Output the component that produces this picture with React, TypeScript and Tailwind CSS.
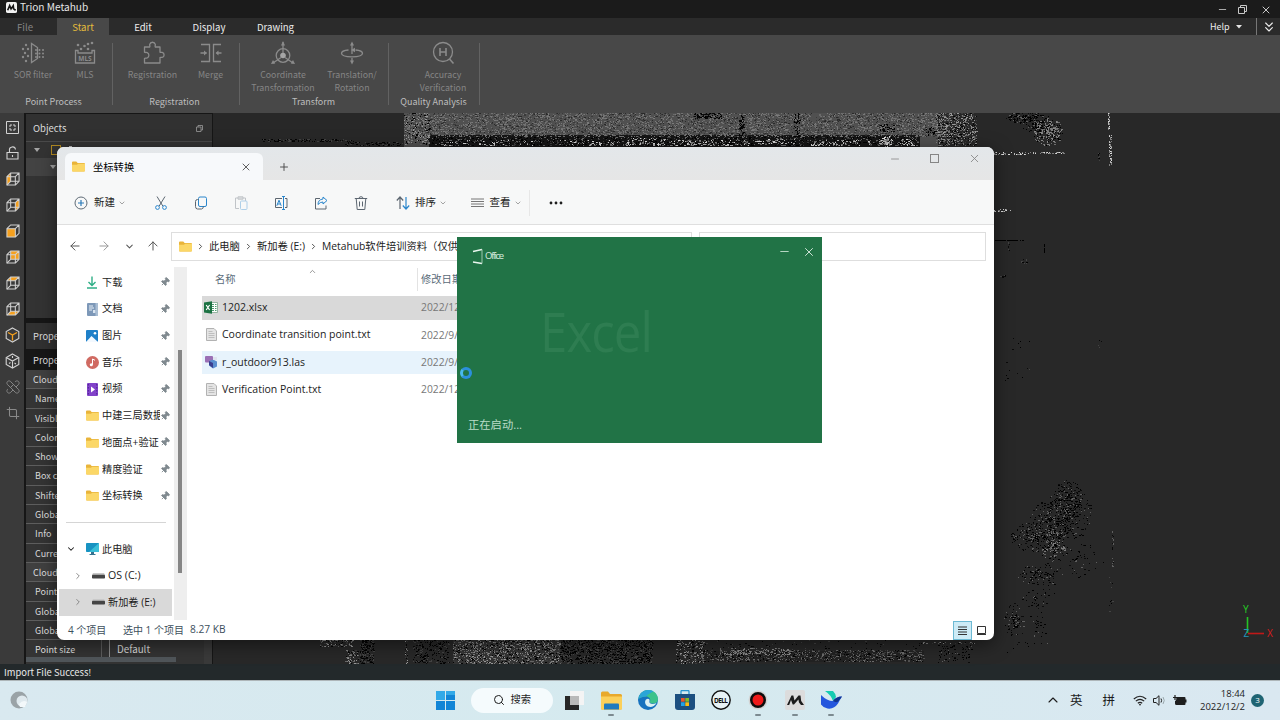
import { useMemo, type ReactNode } from "react";
import clsx from "clsx";
import { ArrowLeft, ArrowRight, ArrowUp, ChevronDown, ChevronRight, ChevronUp, ChevronsDown, Crop, Minus, Pin, Plus, Search, X } from "lucide-react";

/* ---------- point cloud viewport ---------- */

const makeRandom = (seed: number) => {
  let s = seed;
  return () => {
    s = (s * 1664525 + 1013904223) % 4294967296;
    return s / 4294967296;
  };
};

type Patch = { x: number; y: number; w: number; h: number; n: number; tones: string[]; round?: boolean };

const GREY = ["#808080", "#666666", "#989898", "#050505", "#3c3c3c"];
const DARK = ["#000000", "#0a0a0a", "#050505", "#444444"];
const LIGHT = ["#b8b8b8", "#dcdcdc", "#7f7f7f"];
const TREE = ["#000000", "#050505", "#000000", "#0c0c0c", "#5f5f5f"];

const patches: Patch[] = [
  // building roof along the top edge
  { x: 404, y: 113, w: 546, h: 24, n: 4600, tones: ["#7a7a7a", "#6b6b6b", "#3a3a3a", "#727272", "#2a2a2a"] },
  { x: 404, y: 113, w: 26, h: 32, n: 260, tones: GREY },
  { x: 936, y: 113, w: 41, h: 33, n: 640, tones: GREY },
  { x: 432, y: 137, w: 486, h: 9, n: 1200, tones: ["#000000", "#050505", "#6a6a6a", "#3d3d3d"] },
  { x: 440, y: 140, w: 96, h: 6, n: 50, tones: LIGHT },
  { x: 560, y: 140, w: 60, h: 6, n: 36, tones: LIGHT },
  { x: 625, y: 138, w: 40, h: 8, n: 60, tones: LIGHT },
  { x: 668, y: 140, w: 82, h: 6, n: 90, tones: LIGHT },
  { x: 755, y: 139, w: 40, h: 5, n: 45, tones: LIGHT },
  { x: 810, y: 140, w: 60, h: 6, n: 70, tones: LIGHT },
  { x: 879, y: 136, w: 14, h: 11, n: 80, tones: LIGHT, round: true },
  { x: 900, y: 139, w: 14, h: 7, n: 30, tones: LIGHT },
  { x: 694, y: 112, w: 28, h: 7, n: 150, tones: DARK },
  { x: 739, y: 114, w: 5, h: 22, n: 80, tones: DARK },
  { x: 794, y: 113, w: 6, h: 24, n: 90, tones: DARK },
  { x: 880, y: 124, w: 15, h: 8, n: 70, tones: DARK },
  { x: 926, y: 127, w: 9, h: 9, n: 60, tones: DARK, round: true },
  { x: 262, y: 139, w: 92, h: 3, n: 130, tones: DARK },
  { x: 345, y: 142, w: 58, h: 4, n: 70, tones: DARK },
  // tree and walls, upper right
  { x: 1006, y: 112, w: 34, h: 12, n: 110, tones: TREE, round: true },
  { x: 1020, y: 113, w: 34, h: 20, n: 130, tones: TREE, round: true },
  { x: 1033, y: 118, w: 30, h: 28, n: 250, tones: ["#000000", "#7d7d7d", "#6c6c6c", "#888888"], round: true },
  { x: 994, y: 152, w: 33, h: 3, n: 36, tones: LIGHT },
  { x: 1028, y: 152, w: 36, h: 2, n: 32, tones: LIGHT },
  { x: 994, y: 209, w: 17, h: 3, n: 18, tones: LIGHT },
  { x: 1108, y: 113, w: 2, h: 17, n: 40, tones: LIGHT },
  { x: 1109, y: 134, w: 3, h: 32, n: 70, tones: LIGHT },
  { x: 1098, y: 153, w: 2, h: 9, n: 14, tones: DARK },
  { x: 995, y: 240, w: 29, h: 1, n: 60, tones: ["#000000"] },
  { x: 1008, y: 242, w: 2, h: 10, n: 10, tones: DARK },
  { x: 1044, y: 244, w: 1, h: 9, n: 14, tones: ["#000000"] },
  { x: 1021, y: 259, w: 7, h: 5, n: 9, tones: DARK },
  { x: 1000, y: 275, w: 6, h: 3, n: 10, tones: DARK },
  { x: 1003, y: 335, w: 28, h: 56, n: 16, tones: DARK },
  { x: 1098, y: 340, w: 4, h: 8, n: 4, tones: DARK },
  // big tree, lower right
  { x: 1054, y: 480, w: 28, h: 32, n: 130, tones: TREE, round: true },
  { x: 1046, y: 486, w: 46, h: 54, n: 250, tones: TREE, round: true },
  { x: 1030, y: 500, w: 44, h: 40, n: 190, tones: TREE, round: true },
  { x: 1010, y: 522, w: 52, h: 30, n: 230, tones: TREE, round: true },
  { x: 1040, y: 528, w: 26, h: 34, n: 130, tones: ["#7a7a7a", "#000000", "#606060"], round: true },
  { x: 1048, y: 542, w: 56, h: 36, n: 60, tones: TREE, round: true },
  { x: 1018, y: 566, w: 30, h: 20, n: 60, tones: TREE, round: true },
  { x: 1036, y: 562, w: 26, h: 34, n: 50, tones: TREE, round: true },
  { x: 1022, y: 590, w: 28, h: 18, n: 36, tones: TREE, round: true },
  { x: 1004, y: 602, w: 20, h: 36, n: 90, tones: TREE, round: true },
  { x: 1028, y: 608, w: 18, h: 30, n: 24, tones: TREE, round: true },
  { x: 1004, y: 632, w: 44, h: 29, n: 14, tones: TREE },
  { x: 1112, y: 530, w: 2, h: 38, n: 22, tones: ["#5f5f5f", "#0a0a0a"] },
  { x: 1108, y: 565, w: 6, h: 52, n: 10, tones: DARK },
  // facade showing under the explorer window
  { x: 320, y: 640, w: 33, h: 7, n: 90, tones: GREY },
  { x: 345, y: 650, w: 14, h: 14, n: 80, tones: GREY },
  { x: 360, y: 640, w: 14, h: 24, n: 200, tones: DARK },
  { x: 405, y: 640, w: 3, h: 24, n: 30, tones: GREY },
  { x: 413, y: 640, w: 36, h: 24, n: 200, tones: DARK },
  { x: 453, y: 640, w: 108, h: 24, n: 1200, tones: GREY },
  { x: 561, y: 640, w: 92, h: 24, n: 900, tones: DARK },
  { x: 676, y: 640, w: 28, h: 24, n: 220, tones: GREY },
  { x: 700, y: 650, w: 224, h: 12, n: 900, tones: ["#6c6c6c", "#505050", "#050505", "#3c3c3c"] },
  { x: 720, y: 648, w: 70, h: 7, n: 120, tones: ["#8a8a8a", "#707070"] },
  { x: 704, y: 640, w: 220, h: 10, n: 60, tones: DARK },
  { x: 920, y: 642, w: 55, h: 2, n: 30, tones: GREY },
  { x: 938, y: 645, w: 34, h: 18, n: 80, tones: TREE },
];

const PointCloud = () => {
  const strokes = useMemo(() => {
    const rnd = makeRandom(913);
    const byTone: Record<string, string[]> = {};
    patches.forEach(({ x, y, w, h, n, tones, round }) => {
      for (let i = 0; i < n; i++) {
        let u = rnd();
        let v = rnd();
        if (round) {
          // denser in the middle, thinning out to the rim
          const a = u * Math.PI * 2;
          const r = Math.pow(v, 0.8) / 2;
          u = 0.5 + Math.cos(a) * r;
          v = 0.5 + Math.sin(a) * r;
        }
        const tone = tones[Math.floor(rnd() * tones.length)];
        const size = rnd() > 0.75 && w > 4 ? 2 : 1;
        (byTone[tone] ||= []).push(`M${Math.floor(x + u * w)} ${Math.floor(y + v * h) + 0.5}h${size}`);
      }
    });
    return Object.entries(byTone);
  }, []);

  return (
    <svg className="block w-full h-full" viewBox="213 113 1067 551" preserveAspectRatio="none">
      <rect x="404" y="113" width="534" height="34" fill="#505050" />
      <rect x="429" y="135" width="491" height="12" fill="#151515" />
      <rect x="453" y="640" width="108" height="24" fill="#343434" />
      <rect x="700" y="651" width="224" height="11" fill="#222" />
      {strokes.map(([tone, d]) => (
        <path key={tone} d={d.join("")} stroke={tone} strokeWidth="1" shapeRendering="crispEdges" />
      ))}
      <g fill="none" strokeWidth="1.6">
        <path d="M1247.5 617v16" stroke="#25c425" />
        <path d="M1248 633.5h16" stroke="#c01818" />
      </g>
      <g className="font-['Noto_Sans',sans-serif]" fontSize="10">
        <text x="1243" y="612.500" fill="#25c425">Y</text>
        <text x="1243.500" y="637" fill="#2295b8">Z</text>
        <text x="1267" y="637" fill="#d41c1c">X</text>
      </g>
    </svg>
  );
};

/* ---------- ribbon ---------- */

const RibbonSvg = ({ children }: { children: ReactNode }) => (
  <svg className="w-6 h-6" viewBox="0 0 24 24" fill="none" stroke="#8b8b8b" strokeWidth="1.3">
    {children}
  </svg>
);

const SorIcon = () => (
  <RibbonSvg>
    <path d="M10.500 2.500v19l6-4v-11z" />
    <g fill="#8b8b8b" stroke="none">
      <circle cx="5" cy="4" r="1.200" /><circle cx="2" cy="8" r="1.200" /><circle cx="7" cy="8" r="1.200" /><circle cx="4" cy="12" r="1.200" />
      <circle cx="7" cy="15" r="1.200" /><circle cx="2" cy="16" r="1.200" /><circle cx="5" cy="20" r="1.200" />
      <circle cx="15" cy="9" r="1" /><circle cx="18.500" cy="9" r="1" /><circle cx="22" cy="9" r="1" />
      <circle cx="15" cy="12.500" r="1" /><circle cx="18.500" cy="12.500" r="1" /><circle cx="22" cy="12.500" r="1" />
      <circle cx="15" cy="16" r="1" /><circle cx="18.500" cy="16" r="1" /><circle cx="22" cy="16" r="1" />
    </g>
  </RibbonSvg>
);

const MlsIcon = () => (
  <RibbonSvg>
    <path d="M2.500 9.500v12.500h19v-12.500h-2.500v2.500h-14v-2.500z" />
    <text x="12" y="19.800" textAnchor="middle" fontSize="6.500" fontWeight="bold" fill="#8b8b8b" stroke="none" className="font-['Noto_Sans',sans-serif]">MLS</text>
    <g fill="#8b8b8b" stroke="none">
      <circle cx="5" cy="4" r="1.300" /><circle cx="8" cy="8" r="1.300" /><circle cx="11.500" cy="5" r="1.300" />
      <circle cx="15" cy="8" r="1.300" /><circle cx="15" cy="3" r="1.300" /><circle cx="19" cy="2" r="1.300" />
    </g>
  </RibbonSvg>
);

const PuzzleIcon = () => (
  <RibbonSvg>
    <path d="M3.500 6h5.200c.6-.6-.2-1.500 0-2.600a2.900 2.900 0 0 1 5.600 0c.2 1.100-.6 2 0 2.600h4.700v5.200c.6.500 1.200 0 2.200.2a2.600 2.600 0 0 1 0 5c-1 .2-1.600-.3-2.200.2v5.400h-15.500v-4.500c.6-.7 1.500-.1 2.700-.5a3 3 0 0 0 0-5.400c-1.200-.4-2.100.2-2.700-.4z" strokeLinejoin="round" />
  </RibbonSvg>
);

const MergeIcon = () => (
  <RibbonSvg>
    <path d="M2 3.500h8.500v17h-8.500M22 3.500h-7.500v17h7.500" />
    <path d="M1.500 12h6M22.500 12h-5" />
    <path d="M5 9.500l3 2.500-3 2.500zM19.500 9.500l-3 2.500 3 2.500z" fill="#8b8b8b" stroke="none" />
  </RibbonSvg>
);

const CoordIcon = () => (
  <RibbonSvg>
    <circle cx="12" cy="14.500" r="6.800" />
    <circle cx="12" cy="14.500" r="2.800" fill="#a5a5a5" stroke="none" />
    <path d="M12 12v-11M10 16.500l-8 5.500M14 16.500l8 5.500" />
    <path d="M10 4.500l2-4.500 2 4.500zM0 23l2-4 2.300 3.500zM24 23l-2-4-2.300 3.500z" fill="#8b8b8b" stroke="none" />
  </RibbonSvg>
);

const RotateIcon = () => (
  <RibbonSvg>
    <path d="M8.500 9c-4 .3-7 1.500-7 3.300 0 2.200 4.700 3.500 10.500 3.500s10.500-1.300 10.500-3.500c0-1.800-3-3-7-3.300" />
    <path d="M12 2v11M12 17v4" />
    <path d="M10 4.500l2-4 2 4zM10 19.500l2 4 2-4zM11 9l4 2.200v-4.400z" fill="#8b8b8b" stroke="none" />
  </RibbonSvg>
);

const AccuracyIcon = () => (
  <RibbonSvg>
    <circle cx="12" cy="11" r="9.500" />
    <path d="M18.500 18l4 4.500" strokeWidth="1.600" />
    <path d="M9 7v8M15 7v8M9 11h6" strokeWidth="1.600" />
  </RibbonSvg>
);

const RibbonItem = ({ icon, lines, width }: { icon: ReactNode; lines: string[]; width: string }) => (
  <div className={clsx("flex flex-col items-center shrink-0", width)}>
    {icon}
    <div className="mt-[4px] text-center text-[8.800px] leading-[12.500px] text-[#858585] whitespace-nowrap">
      {lines.map((line) => (
        <div key={line}>{line}</div>
      ))}
    </div>
  </div>
);

const RibbonGroup = ({ label, width, pad, labelPad, children }: { label: string; width: string; pad: string; labelPad?: string; children: ReactNode }) => (
  <div className={clsx("flex pt-[6px] h-[78px] shrink-0", width)}>
    <div className="flex flex-col grow h-full">
      <div className={clsx("flex h-[55px]", pad)}>{children}</div>
      <div className={clsx("text-center text-[9px] leading-3 text-[#bdbdbd] whitespace-nowrap", labelPad)}>{label}</div>
    </div>
    <div className="w-px h-[62px] mt-[2px] bg-[#626262]" />
  </div>
);

const MBadge = ({ className }: { className?: string }) => (
  <svg className={className} viewBox="0 0 12 12">
    <rect width="12" height="12" rx="2" fill="#f1f1f1" />
    <path d="M1.800 9l2.200-5 1.500 3.500 2.400-3.500.4 3.500 2.200 1.500" fill="none" stroke="#161616" strokeWidth="1.800" />
  </svg>
);

const TopBars = () => (
  <>
    <div className="flex items-center h-[18px] pb-[3px] pl-[6px] bg-[#1b1b1b] text-[#e6e6e6] text-[10.100px]">
      <MBadge className="w-[11px] h-[11px]" />
      <span className="ml-[3px] -mt-px grow">Trion Metahub</span>
      <div className="flex items-center gap-[10px] pt-[4px] pr-[8px] text-[#c9c9c9]">
        <Minus size={11} strokeWidth={1.800} />
        <svg width="9" height="9" viewBox="0 0 9 9" fill="none" stroke="currentColor"><path d="M.5 2.500h6v6h-6zM2.500 2.500v-2h6v6h-2" /></svg>
        <X size={12} strokeWidth={2} className="ml-[3px]" />
      </div>
    </div>
    <div className="flex h-[17px] bg-[#2b2b2b] text-[9.600px] leading-[18px] text-[#ededed]">
      <div className="w-[57px] pl-[17px] text-[#858585]">File</div>
      <div className="w-[52px] text-center bg-[#484848] text-[#e5bd3c]">Start</div>
      <div className="w-[68px] text-center">Edit</div>
      <div className="w-[64px] text-center">Display</div>
      <div className="w-[69px] text-center">Drawing</div>
      <div className="grow" />
      <div className="flex items-center w-[46px] text-[9px]">
        Help
        <svg className="ml-[6px]" width="6" height="4" viewBox="0 0 6 4"><path d="M0 0h6l-3 3.500z" fill="#e5e5e5" /></svg>
      </div>
      <div className="flex items-center justify-center w-[24px] border-l border-[#777]">
        <ChevronsDown size={16} strokeWidth={1.700} />
      </div>
    </div>
    <div className="flex h-[78px] bg-[#484848]">
      <RibbonGroup label="Point Process" width="w-[113px]" pad="pl-[7px]" labelPad="pr-[5px]">
        <RibbonItem icon={<SorIcon />} lines={["SOR filter"]} width="w-[52px]" />
        <RibbonItem icon={<MlsIcon />} lines={["MLS"]} width="w-[52px]" />
      </RibbonGroup>
      <RibbonGroup label="Registration" width="w-[127px]" pad="pl-[10px]" labelPad="pr-[3px]">
        <RibbonItem icon={<PuzzleIcon />} lines={["Registration"]} width="w-[59px]" />
        <RibbonItem icon={<MergeIcon />} lines={["Merge"]} width="w-[57px]" />
      </RibbonGroup>
      <RibbonGroup label="Transform" width="w-[149px]" pad="pl-[8px]" labelPad="pr-px">
        <RibbonItem icon={<CoordIcon />} lines={["Coordinate", "Transformation"]} width="w-[70px]" />
        <RibbonItem icon={<RotateIcon />} lines={["Translation/", "Rotation"]} width="w-[68px]" />
      </RibbonGroup>
      <RibbonGroup label="Quality Analysis" width="w-[91px]" pad="pl-[19px]" labelPad="pr-px">
        <RibbonItem icon={<AccuracyIcon />} lines={["Accuracy", "Verification"]} width="w-[70px]" />
      </RibbonGroup>
    </div>
  </>
);

/* ---------- left tool strip ---------- */

const cubeFaces: Record<string, string> = {
  left: "M1 5l4-4v9l-4 4z",
  right: "M10 5l4-4v9l-4 4z",
  front: "M1 5h9v9h-9z",
  back: "M5 1h9v9h-9z",
  top: "M1 5l4-4h9l-4 4z",
  bottom: "M1 14l4-4h9l-4 4z",
};

const CubeIcon = ({ face }: { face: string }) => (
  <svg width="14" height="14" viewBox="0 0 15 15" fill="none" stroke="#d2d2d2" strokeWidth="1.100">
    <path d={cubeFaces[face]} fill="#f5a01e" stroke="none" />
    <path d="M1 5h9v9h-9zM1 5l4-4h9v9l-4 4M10 5l4-4" />
    {face !== "front" && <path d="M5 1v9h9M1 14l4-4" />}
  </svg>
);

const IsoCube = ({ dashed }: { dashed?: boolean }) => (
  <svg width="15" height="16" viewBox="0 0 15 16" fill="none" stroke="#d2d2d2" strokeWidth="1.100">
    <path d="M7.500 1l6.300 3.500v7l-6.300 3.500-6.300-3.500v-7z" />
    {dashed ? (
      <path d="M1.200 4.500l6.300 3.500 6.300-3.500M7.500 8v7M7.500 3v2M4 10.500l1.500-1M9.500 10l1.500 1" />
    ) : (
      <path d="M3 5.500l4.500 2.500 4.500-2.500M7.500 8v5.500" stroke="#f5a01e" strokeWidth="1.300" />
    )}
  </svg>
);

const ToolStrip = () => (
  <div className="flex flex-col w-[24px] bg-[#3a3a3a] shrink-0">
    {[
      <svg key="fit" width="13" height="13" viewBox="0 0 13 13" fill="none" stroke="#d2d2d2"><path d="M.5.5h12v12h-12zM3 5h2v-2M8 3v2h2M3 8h2v2M8 10v-2h2" /></svg>,
      <svg key="lock" width="13" height="14" viewBox="0 0 13 14" fill="none" stroke="#d2d2d2" strokeWidth="1.100"><path d="M1 6.500h11v6.500h-11zM3.500 6.500v-2a3 3 0 0 1 6-1M6.500 9v2" /></svg>,
      <CubeIcon key="l" face="left" />,
      <CubeIcon key="r" face="right" />,
      <CubeIcon key="f" face="front" />,
      <CubeIcon key="b" face="back" />,
      <CubeIcon key="t" face="top" />,
      <CubeIcon key="d" face="bottom" />,
      <IsoCube key="iso" />,
      <IsoCube key="iso2" dashed />,
      <svg key="link" width="14" height="14" viewBox="0 0 14 14" fill="none" stroke="#858585"><path d="M2 5a2.200 2.200 0 1 1 3-3l7 7a2.200 2.200 0 1 1-3 3zM9 2a2.200 2.200 0 1 1 3 3l-2 2M2 9a2.200 2.200 0 1 0 3 3l2-2M5 7l2-2" /></svg>,
      <Crop key="crop" size={14} strokeWidth={1.800} className="text-[#8a8a8a]" />,
    ].map((icon, i) => (
      <div key={i} className="flex items-center justify-center h-[25.950px] pl-[1px] pt-[3px]">{icon}</div>
    ))}
  </div>
);

/* ---------- object / property panels ---------- */

const properties: { label: string; head?: boolean }[] = [
  { label: "Cloud", head: true },
  { label: "Name" },
  { label: "Visible" },
  { label: "Color" },
  { label: "Show" },
  { label: "Box c" },
  { label: "Shifted" },
  { label: "Global" },
  { label: "Info" },
  { label: "Current" },
  { label: "Cloud", head: true },
  { label: "Points" },
  { label: "Global" },
  { label: "Global" },
];

const SidePanels = () => (
  <div className="flex flex-col w-[189px] pl-[2px] bg-[#161616] shrink-0 text-[#dcdcdc]">
    <div className="flex items-center justify-between h-[27px] mt-px mr-px pt-px pl-[7px] pr-[9px] bg-[#313131] text-[9.500px]">
      Objects
      <svg width="7" height="7" viewBox="0 0 7 7" fill="none" stroke="#9a9a9a" strokeWidth=".8"><path d="M.5 2h4.500v4.500h-4.500zM2 2v-1.500h4.500v4.500h-1.500" /></svg>
    </div>
    <div className="h-[177px] mr-px bg-[#333] border-t border-[#4a4a4a]">
      <div className="flex items-center h-[16px] pl-[8px]">
        <svg width="6" height="4" viewBox="0 0 6 4"><path d="M0 0h6l-3 4z" fill="#a5a5a5" /></svg>
        <span className="ml-[11px] w-[10px] h-[10px] border border-[#b28a22]" />
        <span className="ml-[8px] w-[3px] h-[6px] mb-[3px] bg-[#bbb]" />
      </div>
      <div className="flex items-center h-[18px] pl-[24px] bg-[#434343]">
        <svg width="6" height="4" viewBox="0 0 6 4"><path d="M0 0h6l-3 4z" fill="#a5a5a5" /></svg>
      </div>
    </div>
    <div className="h-[26px] mt-[5px] mr-px pl-[7px] bg-[#313131] text-[9.300px] leading-[27px]">Properties</div>
    <div className="h-[20px] mt-px mr-px pl-[7px] bg-[#171717] text-[9.300px] leading-[20px]">Property</div>
    <div className="flex mr-px grow">
      <div className="w-[178px] bg-[#343434] text-[9px]">
        {properties.map(({ label, head }, i) => (
          <div key={i} className={clsx("h-[19.300px] leading-[20px] border-b border-[#5d5d5d]", head ? "pl-[7px] bg-[#404040]" : "pl-[9px]")}>
            {label}
          </div>
        ))}
        <div className="flex h-[17px] leading-[19px]">
          <div className="w-[76px] pl-[9px] border-r border-[#5d5d5d]">Point size</div>
          <div className="ml-[7px] pl-[7px] grow border-l border-[#8a8a8a] text-[9.800px]">Default</div>
        </div>
        <div className="w-[150px] h-[5px] bg-[#50565a]" />
      </div>
      <div className="grow mt-px bg-[#3a3a3a]" />
    </div>
  </div>
);

/* ---------- explorer window ---------- */

const FolderIcon = ({ className }: { className?: string }) => (
  <svg className={clsx("shrink-0", className)} width="13" height="11" viewBox="0 0 13 11">
    <path d="M0 1.500q0-1 1-1h3.300l1.300 1.500h6.400q1 0 1 1v6.500q0 1-1 1h-11q-1 0-1-1z" fill="#e9b43a" />
    <path d="M0 3.800h5l1.200-1h6.800v6.700q0 1-1 1h-11q-1 0-1-1z" fill="#fbd767" />
  </svg>
);

const TextFileIcon = () => (
  <svg width="11" height="13" viewBox="0 0 11 13">
    <path d="M.5.5h7.500l2.500 2.500v9.500h-10z" fill="#e4e4e4" stroke="#b2b2b2" />
    <path d="M2.500 3.500h4M2.500 5.500h6M2.500 7.500h6M2.500 9.500h6" stroke="#b9b9b9" strokeWidth=".9" />
  </svg>
);

const ExcelFileIcon = () => (
  <svg width="14" height="13" viewBox="0 0 14 13">
    <path d="M6 1.500h7.500v10h-7.500z" fill="#fff" stroke="#7fa98f" strokeWidth=".8" />
    <path d="M8 3.500h2M11 3.500h1.500M8 5.500h2M11 5.500h1.500M8 7.500h2M11 7.500h1.500M8 9.500h2M11 9.500h1.500" stroke="#4f9a70" />
    <path d="M0 1.500l8-1.300v12.600l-8-1.300z" fill="#1c7243" />
    <path d="M2.200 4l3.400 5M5.600 4l-3.400 5" stroke="#fff" strokeWidth="1.200" />
  </svg>
);

const LasFileIcon = () => (
  <svg width="13" height="13" viewBox="0 0 13 13">
    <rect x="0" y="0" width="8" height="6.500" rx="1" fill="#9b6fb5" />
    <path d="M4 5l4-1.500 4 2v5l-4 2-4-3z" fill="#5b8fd0" />
    <path d="M4 5l4 2v5l-4-3z" fill="#3b3f90" />
    <rect x="8" y="1" width="4" height="3" fill="#dfe3ee" />
  </svg>
);

const quickAccess: { label: string; icon: ReactNode }[] = [
  { label: "下载", icon: <svg width="12" height="13" viewBox="0 0 12 13" fill="none" stroke="#2fae86" strokeWidth="1.400"><path d="M6 .5v9M2.500 6l3.500 3.500 3.500-3.500M1 12h10" /></svg> },
  { label: "文档", icon: <svg width="11" height="13" viewBox="0 0 11 13"><rect width="11" height="13" rx="1" fill="#7d98b8" /><path d="M2 3h4M2 5h5M2 7h3" stroke="#e9f0f7" /><rect x="6" y="7" width="2.500" height="3" fill="#d9e4f0" /><rect x="8.500" width="2.500" height="13" fill="#a9bdd3" /></svg> },
  { label: "图片", icon: <svg width="12" height="12" viewBox="0 0 12 12"><rect width="12" height="12" rx="1" fill="#1f80c9" /><path d="M0 12l5.500-6 6.500 6z" fill="#f3f9ff" /><circle cx="9" cy="3.200" r="1.300" fill="#fff" /></svg> },
  { label: "音乐", icon: <svg width="13" height="13" viewBox="0 0 13 13"><circle cx="6.500" cy="6.500" r="6.500" fill="#d06a62" /><circle cx="5.300" cy="8.800" r="1.500" fill="#fff" /><path d="M6.500 8.800v-5.800l2.500 1.300" stroke="#fff" fill="none" /></svg> },
  { label: "视频", icon: <svg width="11" height="13" viewBox="0 0 11 13"><rect width="11" height="13" rx="1" fill="#8142c9" /><path d="M4 3.500l4 3-4 3z" fill="#fff" /><path d="M1.300 1v11M9.800 1v11" stroke="#4d2390" strokeDasharray="1.500 1.500" /></svg> },
  { label: "中建三局数据", icon: <FolderIcon /> },
  { label: "地面点+验证", icon: <FolderIcon /> },
  { label: "精度验证", icon: <FolderIcon /> },
  { label: "坐标转换", icon: <FolderIcon /> },
];

const files = [
  { name: "1202.xlsx", date: "2022/12/2", icon: <ExcelFileIcon />, row: "bg-[#d9d9d9]" },
  { name: "Coordinate transition point.txt", date: "2022/9/13", icon: <TextFileIcon />, row: "" },
  { name: "r_outdoor913.las", date: "2022/9/13", icon: <LasFileIcon />, row: "bg-[#e7f3fc]" },
  { name: "Verification Point.txt", date: "2022/12/2", icon: <TextFileIcon />, row: "" },
];

const DriveIcon = () => (
  <svg width="13" height="6" viewBox="0 0 13 6"><path d="M1 0h11l1 2h-13z" fill="#c9c9c9" /><rect y="1.800" width="13" height="3.700" rx=".8" fill="#454545" /></svg>
);

const ToolIcon = ({ children, dim }: { children: ReactNode; dim?: boolean }) => (
  <div className={clsx("flex justify-center w-[40px] shrink-0", dim && "opacity-35")}>
    <svg width="14" height="14" viewBox="0 0 14 14" fill="none" stroke="#5c6670" strokeWidth="1">{children}</svg>
  </div>
);

const ExplorerToolbar = () => (
  <div className="flex items-center h-[45px] pt-px bg-[#f7f8f8] border-b border-[#dfdfdf] text-[#1f1f1f] text-[10.500px] shrink-0">
    <div className="flex items-center w-[83.500px] pl-[17px] shrink-0">
      <svg width="14" height="14" viewBox="0 0 14 14" fill="none"><circle cx="7" cy="7" r="6" stroke="#5f6b76" /><path d="M7 4v6M4 7h6" stroke="#2a7ab8" strokeWidth="1.200" /></svg>
      <span className="ml-[6px] pt-px">新建</span>
      <ChevronDown size={8} className="ml-[3px] text-[#777]" />
    </div>
    <ToolIcon><path d="M3 .5l5.800 9.500M11 .5l-5.800 9.500" /><g stroke="#2a86cc"><circle cx="3.500" cy="11.500" r="1.900" /><circle cx="10.500" cy="11.500" r="1.900" /></g></ToolIcon>
    <ToolIcon><rect x="4.500" y="1" width="8" height="9.500" rx="1.500" stroke="#2a86cc" /><path d="M4.500 3.500h-1q-2 0-2 2v5q0 2.500 2 2.500h4q1.500 0 2-2.500" /></ToolIcon>
    <ToolIcon dim><path d="M5 12.500h-3.500v-10.500h10v3" /><path d="M4 .8h5v2.400h-5z" /><rect x="6.500" y="5" width="6.500" height="8.500" rx="1" stroke="#2a86cc" /></ToolIcon>
    <ToolIcon><path d="M8 2.500h-6.500v9h6.500M11 2.500h2v9h-2" /><path d="M9.500.5v13M8 .5h3M8 13.500h3M2.800 9.800l2.200-5.600 2.200 5.600M3.500 8h3" stroke="#2a86cc" /></ToolIcon>
    <ToolIcon><path d="M6 2.500h-4.500v10.500h10.500v-3.500" /><path d="M9 1l4 3.500-4 3.500v-2q-3 0-5 2.500 0-5 5-5.500z" stroke="#2a86cc" /></ToolIcon>
    <ToolIcon><path d="M.8 2.500h12.400M5 2.500q0-1.800 2-1.800t2 1.800M2.200 2.500l1 11h7.600l1-11M5.500 5.500v5M8.500 5.500v5" /></ToolIcon>
    <div className="flex items-center w-[67px] pl-[15px] shrink-0">
      <svg width="14" height="14" viewBox="0 0 14 14" fill="none" strokeWidth="1.200"><path d="M4 13v-11.500M.8 4.500l3.200-3.500 3.200 3.500" stroke="#5c6670" /><path d="M10 1v11.500M6.800 9.500l3.200 3.500 3.200-3.500" stroke="#2a86cc" /></svg>
      <span className="ml-[5.500px] pt-px">排序</span>
      <ChevronDown size={8} className="ml-[3px] text-[#777]" />
    </div>
    <div className="flex items-center w-[82px] pl-[23px] border-r border-[#e7e7e7] h-[26px] shrink-0">
      <svg width="13" height="10" viewBox="0 0 13 10" stroke="#777"><path d="M0 1h13M0 3.500h13M0 6h13M0 8.500h13" /></svg>
      <span className="ml-[6px] pt-px">查看</span>
      <ChevronDown size={8} className="ml-[3px] text-[#777]" />
    </div>
    <svg className="ml-[19px]" width="14" height="4" viewBox="0 0 14 4" fill="#1f1f1f"><circle cx="2" cy="2" r="1.400" /><circle cx="7" cy="2" r="1.400" /><circle cx="12" cy="2" r="1.400" /></svg>
  </div>
);

const Crumb = ({ children }: { children: ReactNode }) => (
  <>
    <ChevronRight size={9} strokeWidth={2.400} className="mx-[4px] text-[#444] shrink-0" />
    <span className="pt-px whitespace-nowrap">{children}</span>
  </>
);

const NavPane = () => (
  <div className="w-[117px] shrink-0 text-[10.200px] text-[#1c1c1c]">
    <div className="h-[241px] pt-[2px]">
      {quickAccess.map(({ label, icon }) => (
        <div key={label} className="flex items-center h-[26.700px] pl-[28px]">
          <span className="flex justify-center w-[14px]">{icon}</span>
          <span className="ml-[3px] w-[58px] overflow-hidden whitespace-nowrap">{label}</span>
          <Pin size={10} className="rotate-45 text-[#808a90] fill-[#808a90]" />
        </div>
      ))}
    </div>
    <div className="ml-[9px] w-[100px] mt-[14px] h-px bg-[#d5d5d5]" />
    <div className="flex items-center h-[26.500px] mt-[13px] pl-[9px]">
      <ChevronDown size={10} strokeWidth={2.500} />
      <svg className="ml-[10px]" width="13" height="12" viewBox="0 0 13 12"><rect width="13" height="9" rx=".8" fill="#1893c2" /><path d="M13 0v9h-10z" fill="#3bbfd8" /><path d="M5 9h3v2h1.500v1h-6v-1h1.500z" fill="#35728f" /></svg>
      <span className="ml-[3px]">此电脑</span>
    </div>
    <div className="flex items-center h-[26.500px] pl-[16px]">
      <ChevronRight size={10} strokeWidth={2} className="text-[#777]" />
      <span className="ml-[9px]"><DriveIcon /></span>
      <span className="ml-[3px] text-[10.600px]">OS (C:)</span>
    </div>
    <div className="flex items-center h-[26.500px] ml-[2px] mr-[2px] pl-[14px] bg-[#d9d9d9]">
      <ChevronRight size={10} strokeWidth={2} className="text-[#777]" />
      <span className="ml-[9px]"><DriveIcon /></span>
      <span className="ml-[3px]">新加卷 (E:)</span>
    </div>
  </div>
);

const ExplorerWindow = () => (
  <div className="absolute left-[57px] top-[147px] flex flex-col w-[937px] h-[493px] rounded-[7px] overflow-hidden bg-white shadow-[0_4px_18px_rgba(0,0,0,0.5)] font-['Open_Sans','Noto_Sans_CJK_SC',sans-serif]">
    <div className="flex h-[33px] bg-linear-to-b from-[#e3e7ea] to-[#e6e6e6] shrink-0">
      <div className="flex items-center self-end w-[198px] h-[27px] ml-[8px] pl-[7px] pr-[11px] rounded-t-[6px] bg-[#f7f9fb] text-[10.300px] text-black">
        <FolderIcon />
        <span className="ml-[8px] pt-[2px] grow">坐标转换</span>
        <X size={12} strokeWidth={1.700} className="text-[#444]" />
      </div>
      <Plus size={12} strokeWidth={1.800} className="ml-[15px] mt-[14px] text-[#444]" />
      <div className="flex items-center gap-[29px] ml-auto h-[23px] pr-[13.500px] text-[#858585]">
        <Minus size={12} strokeWidth={1.600} />
        <svg width="9" height="9" viewBox="0 0 9 9" fill="none" stroke="currentColor"><rect x=".5" y=".5" width="8" height="8" /></svg>
        <X size={13} strokeWidth={1.600} />
      </div>
    </div>
    <ExplorerToolbar />
    <div className="flex items-center h-[42px] pl-[11px] pr-[8px] shrink-0 text-[#555]">
      <ArrowLeft size={14} strokeWidth={1.700} />
      <ArrowRight size={14} strokeWidth={1.700} className="ml-[15px] text-[#999]" />
      <ChevronDown size={11} strokeWidth={2.200} className="ml-[13px]" />
      <ArrowUp size={14} strokeWidth={1.700} className="ml-[11px]" />
      <div className="flex items-center w-[521px] h-[29px] ml-[11px] pl-[7px] border border-[#dedede] text-[10.300px] text-[#222] overflow-hidden">
        <FolderIcon />
        <Crumb>此电脑</Crumb>
        <Crumb>新加卷 (E:)</Crumb>
        <Crumb>Metahub软件培训资料（仅供</Crumb>
      </div>
      <div className="grow h-[29px] ml-[7px] border border-[#dedede]" />
    </div>
    <div className="flex grow min-h-0">
      <NavPane />
      <div className="w-[13px] bg-[#eeeeee] shrink-0">
        <div className="w-[4px] h-[223px] ml-[4px] mt-[83px] bg-[#868686]" />
      </div>
      <div className="w-[610px] ml-[15px]">
        <div className="relative flex items-center h-[25.500px] text-[10.300px] text-[#5a6b78]">
          <span className="w-[215px] pl-[13px]">名称</span>
          <ChevronUp size={9} className="absolute left-[106px] top-0 text-[#777]" />
          <span className="h-[23px] pl-[3px] leading-[23px] border-l border-[#e3e3e3]">修改日期</span>
        </div>
        {files.map(({ name, date, icon, row }) => (
          <div key={name} className={clsx("flex items-center h-[23.400px] mt-[3.900px] pl-[2px] text-[10.500px] text-[#222]", row)}>
            <span className="flex justify-center w-[14px] pb-px">{icon}</span>
            <span className="ml-[4px] w-[199px] whitespace-nowrap">{name}</span>
            <span className="text-[#777] text-[10.300px]">{date}</span>
          </div>
        ))}
      </div>
    </div>
    <div className="flex items-center h-[20px] pl-[11px] pr-[7px] text-[10px] text-[#3d4f5c] shrink-0">
      <span className="w-[55px]">4 个项目</span>
      <span className="w-[67px]">选中 1 个项目</span>
      <span className="grow text-[10.200px]">8.27 KB</span>
      <span className="flex items-center justify-center w-[19px] h-[19px] bg-[#cdebf6] border border-[#6db9d3]">
        <svg width="9" height="9" viewBox="0 0 9 9" stroke="#333"><path d="M0 1h9M0 3.500h9M0 6h9M0 8.500h9" /></svg>
      </span>
      <svg className="ml-[5px] mr-px" width="9" height="9" viewBox="0 0 9 9" fill="none" stroke="#333"><path d="M.5.5h8v7h-8zM0 8.500h9" /></svg>
    </div>
  </div>
);

/* ---------- Excel splash ---------- */

const ExcelSplash = () => (
  <div className="absolute left-[457px] top-[237px] flex flex-col w-[365px] h-[206px] bg-[#217346] font-['Open_Sans','Noto_Sans_CJK_SC',sans-serif]">
    <div className="flex h-[60px] pl-[15px] pr-[6px] pt-[8px] text-[#d8ebdf]">
      <svg className="mt-[3px]" width="11" height="17" viewBox="0 0 11 17" fill="none"><path d="M1 3.500l9-2M10 15.500l-9-1.500" stroke="#eaf6ef" strokeWidth="1.400" /><path d="M10 1.500v14" stroke="#9cc7ad" /></svg>
      <span className="ml-[2px] mt-[3px] text-[9.500px] leading-[15px] tracking-[-1.400px] grow">Office</span>
      <Minus size={13} strokeWidth={1.500} />
      <X size={14} strokeWidth={1.600} className="ml-[11px]" />
    </div>
    <div className="pl-[83px] text-[54px] leading-[68px] tracking-[-1px] text-[#2e7d51] origin-[83px_50%] scale-x-[0.91]">Excel</div>
    <div className="mt-auto mb-[8px] pl-[11px] text-[11.300px] leading-5 text-[#b9dcc8]">正在启动...</div>
  </div>
);

/* ---------- taskbar ---------- */

const TaskSlot = ({ children, running }: { children: ReactNode; running?: boolean }) => (
  <div className="flex flex-col items-center w-[36.700px] h-[40px] pt-[8px] shrink-0">
    <div className="flex items-center justify-center h-[22px]">{children}</div>
    {running && <div className="w-[6px] h-[2px] mt-[2.500px] rounded-full bg-[#7c8a90]" />}
  </div>
);

const Taskbar = () => (
  <div className="flex h-[40px] bg-linear-to-r from-[#d9e9f0] via-[#d5eaef] to-[#dae8f1] border-t border-[#aeb6b9] text-[#1d1d1d] font-['Open_Sans','Noto_Sans_CJK_SC',sans-serif] shrink-0">
    <div className="w-[427.500px] pl-[10px] pt-[10px] shrink-0">
      <svg width="18" height="18" viewBox="0 0 18 18"><circle cx="9" cy="9" r="8.500" fill="#9aa3a7" /><circle cx="12" cy="10" r="5.500" fill="#dfe9ee" /><path d="M9 13q4-5 8-2l-2 5h-5z" fill="#f3f8fa" /></svg>
    </div>
    <TaskSlot>
      <svg width="19" height="19" viewBox="0 0 19 19" fill="#1285d6"><path d="M0 0h9v9h-9zM10 0h9v9h-9zM0 10h9v9h-9zM10 10h9v9h-9z" /><path d="M0 0h9v9h-9zM10 0h9v4h-9z" fill="#32a9e8" /></svg>
    </TaskSlot>
    <div className="flex items-center justify-center gap-[5px] w-[82px] h-[25px] mt-[6.500px] ml-[6.500px] mr-[3.500px] pl-px rounded-full bg-[#f5fbfd] text-[10.300px] shrink-0">
      <Search size={12} strokeWidth={2} />搜索
    </div>
    <TaskSlot>
      <svg width="19" height="19" viewBox="0 0 19 19"><rect x="5" y="0" width="14" height="14" fill="#f4f4f4" /><path d="M0 5h5v9h9v5h-14z" fill="#262626" /><path d="M5 5h9v9h-9z" fill="#b9b9b9" /></svg>
    </TaskSlot>
    <TaskSlot running>
      <svg width="21" height="19" viewBox="0 0 21 19"><path d="M0 2q0-1.500 1.500-1.500h5.500l2 2.500h10.500q1.500 0 1.500 1.500v13q0 1-1 1h-19q-1 0-1-1z" fill="#e8a92c" /><path d="M0 5.500h21v12q0 1-1 1h-19q-1 0-1-1z" fill="#fbd05a" /><path d="M3 13.500q0-1 1-1h13q1 0 1 1v5h-15z" fill="#1f7bbf" /></svg>
    </TaskSlot>
    <TaskSlot>
      <svg width="20" height="20" viewBox="0 0 20 20"><circle cx="10" cy="10" r="10" fill="#1672bf" /><path d="M.5 9c1-5.500 5-9 9.500-9 6 0 10 4.500 10 9 0 3-2 4.500-5 4.500-2 0-3.500-.5-3-2 1-2.500-1-5-4-5s-6 1-7.500 2.500z" fill="#3cc38b" /><path d="M.5 9c1-5.500 5-9 9.500-9 2 0 4 .5 5.500 1.500-3 1-6 3-7.500 5-3 0-6 1-7.500 2.500z" fill="#2aa5d8" /><path d="M11.500 11c-1 2.500 2.500 4 7 2-2 4-6 4.500-8.500 3.500s-4-4.500-2-7c2-1.500 4-.500 3.500 1.500z" fill="#d9f0f4" /></svg>
    </TaskSlot>
    <TaskSlot>
      <svg width="20" height="20" viewBox="0 0 20 20"><path d="M6 4v-2.500q0-1 1-1h6q1 0 1 1v2.500" fill="none" stroke="#2a95cf" strokeWidth="1.300" /><path d="M0 4h20v13q0 3-3 3h-14q-3 0-3-3z" fill="#1c4f80" /><path d="M6 8h3.700v3.700h-3.700z" fill="#e9552d" /><path d="M10.300 8h3.700v3.700h-3.700z" fill="#7fba28" /><path d="M6 12.300h3.700v3.700h-3.700z" fill="#22a2e8" /><path d="M10.300 12.300h3.700v3.700h-3.700z" fill="#fbbc12" /></svg>
    </TaskSlot>
    <TaskSlot>
      <svg width="20" height="20" viewBox="0 0 20 20"><circle cx="10" cy="10" r="9.200" fill="#e8f3f6" stroke="#101010" strokeWidth="1.400" /><text x="10" y="12.500" textAnchor="middle" fontSize="6.500" fontWeight="bold" textLength="14" fill="#101010">DELL</text></svg>
    </TaskSlot>
    <TaskSlot running>
      <svg width="20" height="20" viewBox="0 0 20 20"><circle cx="10" cy="10" r="9.500" fill="#d3d3d3" /><circle cx="10" cy="10" r="8" fill="#0d0d0d" /><circle cx="10" cy="10" r="5.500" fill="#ef1a1a" /></svg>
    </TaskSlot>
    <TaskSlot running>
      <svg width="20" height="20" viewBox="0 0 20 20"><rect width="20" height="20" rx="2" fill="#dcdcdc" /><path d="M2 15l4.500-9.500h1.800l1.200 5 4-5h2l.7 5.500 2.800 4h-3l-2-2.500-.6-3-4.400 5h-1.300l-1.700-4.500-1.800 5z" fill="#1c1c1c" /></svg>
    </TaskSlot>
    <TaskSlot running>
      <svg width="21" height="18" viewBox="0 0 21 18"><path d="M4 0h8q3 3 3 6l-3 4q-2-6-8-10z" fill="#16cbb2" /><path d="M0 4q6 6 12 6 3-4.500 9-4.500-2 3-4 7-4 6-10.500 5-4.500-1-6.500-4z" fill="#2456dd" /><path d="M12 10q3-4.500 9-4.500-2 3-4 5-2 1.500-5-.500z" fill="#11348e" /></svg>
    </TaskSlot>
    <div className="flex items-center grow justify-end pr-[16px] pb-px">
      <ChevronUp size={16} strokeWidth={1.700} />
      <span className="ml-[9px] pt-[2px] text-[12.500px]">英</span>
      <span className="ml-[20px] pt-[2px] text-[12.500px]">拼</span>
      <svg className="ml-[18px]" width="14" height="11" viewBox="0 0 14 11" fill="none" stroke="#222" strokeWidth="1.100"><path d="M.8 4q6.200-5.500 12.400 0M2.800 6.200q4.200-3.600 8.400 0M4.800 8.300q2.200-1.800 4.400 0" /><circle cx="7" cy="9.600" r=".9" fill="#222" stroke="none" /></svg>
      <svg className="ml-[6px]" width="13" height="11" viewBox="0 0 13 11" fill="none" stroke="#222"><path d="M.5 3.500h2.500l3-2.800v9.600l-3-2.800h-2.500zM8 3.500q1.200 2 0 4" /><path d="M10 2q2.500 3.500 0 7" stroke="#9aa8ad" /></svg>
      <svg className="ml-[7px]" width="14" height="11" viewBox="0 0 14 11"><path d="M3 2h8.500q1 0 1 1v1.500h1v3h-1v1.500q0 1-1 1h-8q-1.500 0-1.500-1.500v-2.500q2-1 1-4z" fill="#1e1e1e" /><path d="M2 0v5M0 2.500h4" stroke="#1e1e1e" strokeWidth="1.200" /></svg>
      <div className="ml-[12px] w-[46px] text-right text-[9.500px] leading-[13px]">
        <div>18:44</div>
        <div>2022/12/2</div>
      </div>
      <span className="flex items-center justify-center w-[13px] h-[13px] ml-[6px] rounded-full bg-[#1f6473] text-white text-[8px]">3</span>
    </div>
  </div>
);

export default function App() {
  return (
    <div className="relative flex flex-col w-[1280px] h-[720px] overflow-hidden bg-[#282828] font-['Noto_Sans_CJK_SC',sans-serif]">
      <TopBars />
      <div className="flex h-[551px] bg-[#282828]">
        <ToolStrip />
        <SidePanels />
        <div className="grow">
          <PointCloud />
        </div>
      </div>
      <div className="h-[16px] pl-[4px] bg-[#23292b] text-[9.400px] leading-[17px] text-[#e9e9e9]">Import File Success!</div>
      <Taskbar />
      <ExplorerWindow />
      <ExcelSplash />
      {/* busy cursor */}
      <div className="absolute left-[460px] top-[367px] w-[12px] h-[12px] rounded-full border-[3px] border-[#2b8fdd] border-l-[#49b9ee]" />
    </div>
  );
}
